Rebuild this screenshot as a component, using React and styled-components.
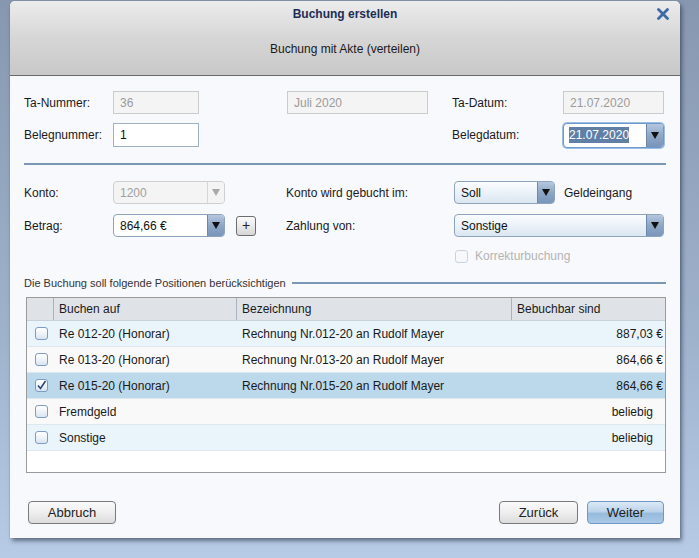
import React, { useState } from 'react';
import styled, { createGlobalStyle } from 'styled-components';

const GlobalStyle = createGlobalStyle`
  html, body {
    margin: 0;
    padding: 0;
  }
  body {
    width: 699px;
    height: 558px;
    overflow: hidden;
    font-family: "Liberation Sans", Arial, sans-serif;
    font-size: 12px;
    color: #1a1a1a;
    background: linear-gradient(to bottom, #8797b0 0%, #9fb2cc 60%, #b7cbe6 100%);
  }
`;

const positions = [
  { id: 1, buchen: 'Re 012-20 (Honorar)', bez: 'Rechnung Nr.012-20 an Rudolf Mayer', betrag: '887,03 €', tone: 'blue' },
  { id: 2, buchen: 'Re 013-20 (Honorar)', bez: 'Rechnung Nr.013-20 an Rudolf Mayer', betrag: '864,66 €', tone: 'white' },
  { id: 3, buchen: 'Re 015-20 (Honorar)', bez: 'Rechnung Nr.015-20 an Rudolf Mayer', betrag: '864,66 €', tone: 'selected' },
  { id: 4, buchen: 'Fremdgeld', bez: '', betrag: 'beliebig', tone: 'white', free: true },
  { id: 5, buchen: 'Sonstige', bez: '', betrag: 'beliebig', tone: 'blue', free: true },
];

const ArrowDown = ({ color = '#111' }) => (
  <svg width="8" height="7" viewBox="0 0 8 7">
    <path d="M0 0 L8 0 L4 7 Z" fill={color} />
  </svg>
);

const CheckMark = () => (
  <svg width="11" height="11" viewBox="0 0 11 11">
    <path d="M2 5.5 L4.5 8.5 L9.5 1" fill="none" stroke="#2b4a78" strokeWidth="1.6" />
  </svg>
);

const App = () => {
  const [checked, setChecked] = useState({ 3: true });

  const toggle = (id) => {
    setChecked({ ...checked, [id]: !checked[id] });
  };

  return (
    <>
      <GlobalStyle />
      <Screen>
        <Dialog>
          <Header>
            <Title>Buchung erstellen</Title>
            <CloseButton aria-label="Schließen">
              <svg width="12" height="12" viewBox="0 0 12 12">
                <path d="M1.5 1.5 L10.5 10.5 M10.5 1.5 L1.5 10.5" stroke="#3b6aa6" strokeWidth="2.8" strokeLinecap="round" />
              </svg>
            </CloseButton>
            <Subtitle>Buchung mit Akte (verteilen)</Subtitle>
          </Header>

          <Body>
            <TopGrid>
              <Label>Ta-Nummer:</Label>
              <TextField disabled value="36" readOnly />
              <span />
              <TextField disabled value="Juli 2020" readOnly />
              <span />
              <Label>Ta-Datum:</Label>
              <TextField disabled value="21.07.2020" readOnly />

              <Label>Belegnummer:</Label>
              <TextField defaultValue="1" $tall />
              <span />
              <span />
              <span />
              <Label>Belegdatum:</Label>
              <Combo $focused $tall>
                <ComboValue><Selected>21.07.2020</Selected></ComboValue>
                <ArrowButton><ArrowDown /></ArrowButton>
              </Combo>
            </TopGrid>

            <Separator />

            <MidGrid>
              <Label>Konto:</Label>
              <Combo $disabled>
                <ComboValue $disabled>1200</ComboValue>
                <ArrowButton $disabled><ArrowDown color="#a8a8a8" /></ArrowButton>
              </Combo>
              <span />
              <Label>Konto wird gebucht im:</Label>
              <InlineRow>
                <Combo $soft $width="101px">
                  <ComboValue>Soll</ComboValue>
                  <ArrowButton><ArrowDown /></ArrowButton>
                </Combo>
                <Label>Geldeingang</Label>
              </InlineRow>

              <Label>Betrag:</Label>
              <Combo>
                <ComboValue>864,66 €</ComboValue>
                <ArrowButton><ArrowDown /></ArrowButton>
              </Combo>
              <PlusButton>+</PlusButton>
              <Label>Zahlung von:</Label>
              <Combo $soft>
                <ComboValue>Sonstige</ComboValue>
                <ArrowButton><ArrowDown /></ArrowButton>
              </Combo>

              <span />
              <span />
              <span />
              <span />
              <CheckRow>
                <CheckBox $disabled />
                <DisabledText>Korrekturbuchung</DisabledText>
              </CheckRow>
            </MidGrid>

            <SectionTitle>
              <span>Die Buchung soll folgende Positionen berücksichtigen</span>
              <SectionLine />
            </SectionTitle>

            <Table>
              <HeadRow>
                <HeadCell />
                <HeadCell>Buchen auf</HeadCell>
                <HeadCell>Bezeichnung</HeadCell>
                <HeadCell $last>Bebuchbar sind</HeadCell>
              </HeadRow>
              {positions.map((p) => (
                <Row key={p.id} $tone={p.tone} onClick={() => toggle(p.id)}>
                  <CheckCell>
                    <CheckBox>{checked[p.id] && <CheckMark />}</CheckBox>
                  </CheckCell>
                  <Cell>{p.buchen}</Cell>
                  <Cell>{p.bez}</Cell>
                  <Cell $right $free={p.free}>{p.betrag}</Cell>
                </Row>
              ))}
            </Table>

            <Footer>
              <Button>Abbruch</Button>
              <FooterRight>
                <Button $width="79px">Zurück</Button>
                <Button $primary $width="77px">Weiter</Button>
              </FooterRight>
            </Footer>
          </Body>
        </Dialog>
      </Screen>
    </>
  );
};

const Screen = styled.div`
  width: 699px;
  height: 558px;
  padding: 1px 0 0 10px;
  box-sizing: border-box;
`;

const Dialog = styled.div`
  width: 670px;
  height: 537px;
  background: #f8f9fd;
  border-radius: 5px 5px 0 0;
  box-shadow: 2px 3px 4px rgba(30, 40, 60, 0.55), 0 0 1px rgba(0, 0, 0, 0.4);
  display: flex;
  flex-direction: column;
  overflow: hidden;
`;

const Header = styled.div`
  position: relative;
  height: 74px;
  background: linear-gradient(to bottom, #ececec 0%, #d6d6d6 50%, #c8c8c8 100%);
  border-bottom: 1px solid #6a6a6a;
  display: flex;
  flex-direction: column;
  align-items: center;
`;

const Title = styled.div`
  margin-top: 6px;
  font-weight: bold;
  font-size: 12px;
  color: #1c2d55;
`;

const Subtitle = styled.div`
  margin-top: 21px;
  font-size: 12px;
  color: #1a1a1a;
`;

const CloseButton = styled.button`
  position: absolute;
  top: 7px;
  right: 11px;
  border: none;
  background: none;
  padding: 0;
  width: 12px;
  height: 12px;
  cursor: pointer;
  display: flex;
`;

const Body = styled.div`
  flex: 1;
  padding: 15px 14px 0 14px;
  display: flex;
  flex-direction: column;
`;

const TopGrid = styled.div`
  display: grid;
  grid-template-columns: 89px 86px 88px 141px 24px 111px 101px;
  grid-template-rows: 23px 24px;
  row-gap: 9px;
  align-items: center;
`;

const MidGrid = styled.div`
  display: grid;
  grid-template-columns: 89px 112px 61px 168px 210px;
  grid-template-rows: 23px 23px 18px;
  row-gap: 10px;
  align-items: center;
  margin-top: 16px;
`;

const InlineRow = styled.div`
  display: flex;
  align-items: center;
  gap: 9px;
`;

const Label = styled.span`
  font-size: 12px;
  color: #1a1a1a;
  white-space: nowrap;
`;

const TextField = styled.input`
  box-sizing: border-box;
  width: 100%;
  height: ${(p) => (p.$tall ? '24px' : '23px')};
  font-family: inherit;
  font-size: 12px;
  padding: 0 6px;
  border: 1px solid ${(p) => (p.disabled ? '#cbcbcb' : '#9eb0c4')};
  background: ${(p) => (p.disabled ? '#f4f4f5' : '#ffffff')};
  color: ${(p) => (p.disabled ? '#9a9a9a' : '#111')};
  outline: none;
  &:disabled {
    color: #9a9a9a;
  }
`;

const Combo = styled.div`
  box-sizing: border-box;
  width: ${(p) => p.$width || '100%'};
  height: ${(p) => (p.$tall ? '25px' : '23px')};
  display: flex;
  border-radius: 4px;
  overflow: hidden;
  border: 1px solid ${(p) => (p.$disabled ? '#cfcfcf' : p.$focused ? '#6d98cd' : '#8fa3bd')};
  box-shadow: ${(p) => (p.$focused ? '0 0 0 1px #9ebfe4' : 'none')};
  background: ${(p) =>
    p.$disabled
      ? '#f4f4f5'
      : p.$soft
      ? 'linear-gradient(to bottom, #fbfdff 0%, #e9f1f8 55%, #dbe6f0 100%)'
      : '#ffffff'};
`;

const ComboValue = styled.div`
  flex: 1;
  display: flex;
  align-items: center;
  padding: 0 6px;
  font-size: 12px;
  color: ${(p) => (p.$disabled ? '#a0a0a0' : '#111')};
`;

const Selected = styled.span`
  background: #5f7fa6;
  color: #ffffff;
  margin-left: -1px;
  padding: 1px 0;
`;

const ArrowButton = styled.div`
  width: 16px;
  display: flex;
  align-items: center;
  justify-content: center;
  border-left: 1px solid ${(p) => (p.$disabled ? '#d6d6d6' : '#6f88aa')};
  background: ${(p) =>
    p.$disabled
      ? '#f4f4f5'
      : 'linear-gradient(to bottom, #b5c7dd 0%, #8ea7c6 50%, #7995ba 100%)'};
`;

const PlusButton = styled.button`
  box-sizing: border-box;
  width: 20px;
  height: 20px;
  margin-left: 11px;
  padding: 0 0 1px 0;
  border: 1px solid #6d6d6d;
  border-radius: 3px;
  background: linear-gradient(to bottom, #fbfbfb 0%, #e6e6e6 60%, #d6d6d6 100%);
  font-family: inherit;
  font-size: 14px;
  line-height: 1;
  color: #222;
`;

const CheckRow = styled.div`
  display: flex;
  align-items: center;
  gap: 7px;
  padding-left: 1px;
`;

const CheckBox = styled.span`
  box-sizing: border-box;
  width: 13px;
  height: 13px;
  border-radius: 3px;
  display: inline-flex;
  align-items: center;
  justify-content: center;
  border: 1px solid ${(p) => (p.$disabled ? '#c9d3de' : '#7f9bbd')};
  background: ${(p) =>
    p.$disabled ? '#f6f8fb' : 'linear-gradient(to bottom, #ffffff 0%, #eef3f9 50%, #d9e4ef 100%)'};
`;

const DisabledText = styled.span`
  color: #b4b4b4;
  font-size: 12px;
`;

const Separator = styled.div`
  height: 2px;
  background: #7a98b6;
  margin-top: 16px;
`;

const SectionTitle = styled.div`
  display: flex;
  align-items: center;
  gap: 6px;
  margin-top: 12px;
  font-size: 11px;
  color: #333;
  white-space: nowrap;
`;

const SectionLine = styled.div`
  flex: 1;
  height: 2px;
  background: #7a98b6;
`;

const Table = styled.div`
  box-sizing: border-box;
  margin: 8px 0 0 2px;
  width: 640px;
  height: 176px;
  border: 1px solid #9a9a9a;
  background: #ffffff;
  display: flex;
  flex-direction: column;
`;

const columns = '27px 183px 275px 1fr';

const HeadRow = styled.div`
  display: grid;
  grid-template-columns: ${columns};
  height: 22px;
  background: #dfe3e8;
  border-bottom: 1px solid #c9d1da;
`;

const HeadCell = styled.div`
  display: flex;
  align-items: center;
  padding-left: 5px;
  font-size: 12px;
  color: #1a1a1a;
  border-right: ${(p) => (p.$last ? 'none' : '1px solid #aab2bc')};
`;

const rowColors = {
  blue: '#e9f4fb',
  white: '#f9f9f9',
  selected: '#bcd8eb',
};

const Row = styled.div`
  display: grid;
  grid-template-columns: ${columns};
  height: 25px;
  background: ${(p) => rowColors[p.$tone]};
  border-bottom: 1px solid #dce7ef;
  cursor: default;
`;

const CheckCell = styled.div`
  display: flex;
  align-items: center;
  justify-content: center;
  padding-left: 2px;
`;

const Cell = styled.div`
  display: flex;
  align-items: center;
  justify-content: ${(p) => (p.$right ? 'flex-end' : 'flex-start')};
  padding: ${(p) => (p.$free ? '0 12px 0 5px' : '0 2px 0 5px')};
  font-size: 12px;
  color: #1a1a1a;
  white-space: nowrap;
`;

const Footer = styled.div`
  display: flex;
  justify-content: space-between;
  align-items: center;
  margin-top: 28px;
  padding: 0 2px 0 4px;
`;

const FooterRight = styled.div`
  display: flex;
  gap: 9px;
`;

const Button = styled.button`
  box-sizing: border-box;
  width: ${(p) => p.$width || '88px'};
  height: 23px;
  border-radius: 4px;
  font-family: inherit;
  font-size: 13px;
  color: #222;
  padding: 0;
  border: 1px solid ${(p) => (p.$primary ? '#6f98c4' : '#7a7a7a')};
  background: ${(p) =>
    p.$primary
      ? 'linear-gradient(to bottom, #dbe9f6 0%, #bcd3ea 45%, #98bbdd 55%, #a9c8e6 100%)'
      : 'linear-gradient(to bottom, #fafafa 0%, #eeeeee 50%, #dcdcdc 100%)'};
`;

export default App;
